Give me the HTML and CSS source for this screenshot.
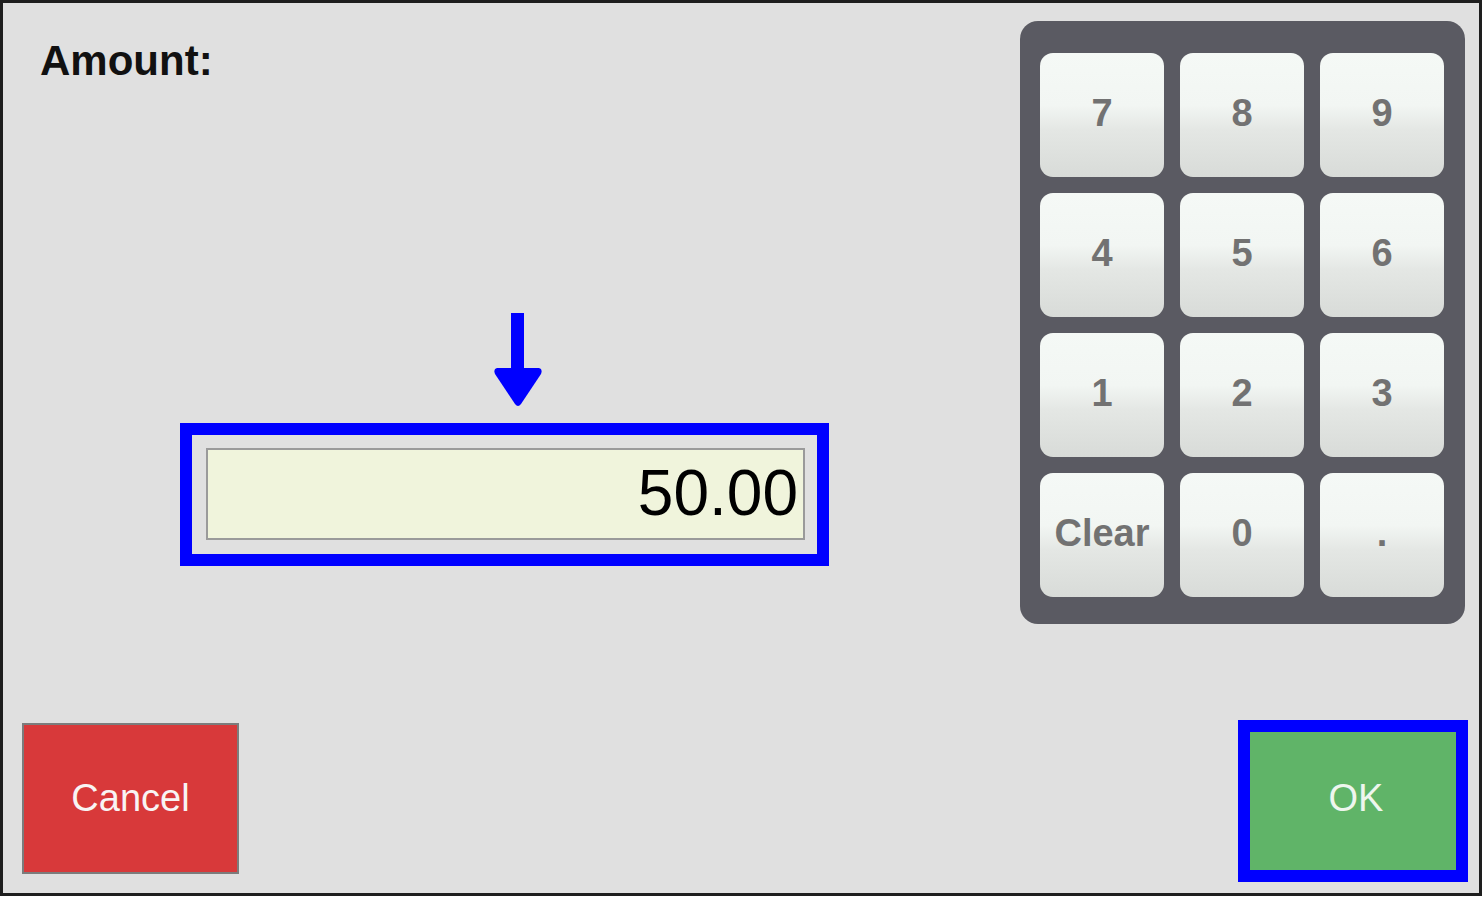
FILE: index.html
```html
<!DOCTYPE html>
<html>
<head>
<meta charset="utf-8">
<link rel="stylesheet" href="styles.css">
</head>
<body>
<div class="frame">
  <div class="main">
    <div class="left">
      <div class="title">Amount:</div>
      <svg class="arrow" width="50" height="93" viewBox="0 0 50 93">
        <rect x="18" y="0" width="13" height="58" fill="#0000ff"/>
        <path d="M4 55 L46 55 Q50 56 48 61 L28 91 Q25 95 22 91 L2 61 Q0 56 4 55 Z" fill="#0000ff"/>
      </svg>
      <div class="highlight field-wrap">
        <div class="field">50.00</div>
      </div>
    </div>
    <div class="keypad">
      <div class="key">7</div>
      <div class="key">8</div>
      <div class="key">9</div>
      <div class="key">4</div>
      <div class="key">5</div>
      <div class="key">6</div>
      <div class="key">1</div>
      <div class="key">2</div>
      <div class="key">3</div>
      <div class="key">Clear</div>
      <div class="key">0</div>
      <div class="key">.</div>
    </div>
  </div>
  <div class="bottom">
    <div class="btn btn-cancel">Cancel</div>
    <div class="highlight ok-wrap">
      <div class="btn btn-ok">OK</div>
    </div>
  </div>
</div>
</body>
</html>
```

FILE: styles.css
```css
html, body {
  margin: 0;
  padding: 0;
  background: #ffffff;
}

body {
  font-family: "Liberation Sans", Arial, sans-serif;
}

.frame {
  width: 1482px;
  height: 896px;
  box-sizing: border-box;
  border: 3px solid #1e1e1e;
  background: #e0e0e0;
  display: flex;
  flex-direction: column;
}

.main {
  flex: 1;
  display: flex;
  justify-content: space-between;
  align-items: flex-start;
}

.left {
  display: flex;
  flex-direction: column;
  align-items: flex-start;
}

.title {
  margin: 37px 0 0 37px;
  font-size: 42px;
  line-height: 42px;
  font-weight: bold;
  color: #111111;
}

.arrow {
  display: block;
  margin: 231px 0 0 490px;
}

.highlight {
  border: 12px solid #0000ff;
  box-sizing: border-box;
}

.field-wrap {
  margin: 17px 0 0 177px;
  width: 649px;
  height: 143px;
  padding: 13px 12px 14px 14px;
}

.field {
  height: 92px;
  box-sizing: border-box;
  border: 2px solid #9a9a9a;
  background: #f0f4dc;
  font-size: 64px;
  line-height: 86px;
  text-align: right;
  padding-right: 5px;
  color: #000000;
}

.keypad {
  margin: 18px 14px 0 0;
  background: #5a5a62;
  border-radius: 18px;
  padding: 32px 21px 27px 20px;
  display: grid;
  grid-template-columns: repeat(3, 124px);
  grid-auto-rows: 124px;
  gap: 16px;
}

.key {
  border-radius: 13px;
  background: linear-gradient(#f5f9f6 0%, #f2f6f3 42%, #e4e7e4 62%, #d8dbd8 100%);
  display: flex;
  align-items: center;
  justify-content: center;
  font-size: 38px;
  font-weight: bold;
  color: #727272;
  padding-bottom: 3px;
  box-sizing: border-box;
}

.bottom {
  display: flex;
  justify-content: space-between;
  align-items: flex-end;
  padding: 0 11px 11px 19px;
}

.btn {
  display: flex;
  align-items: center;
  justify-content: center;
  font-size: 38px;
  color: #f8f4f4;
  box-sizing: border-box;
}

.btn-cancel {
  width: 217px;
  height: 151px;
  margin-bottom: 8px;
  background: #d8393a;
  border: 2px solid #7c7c7c;
}

.ok-wrap {
  width: 230px;
  height: 162px;
}

.btn-ok {
  width: 100%;
  height: 100%;
  background: #60b468;
  color: #eef6ee;
  padding: 0 0 5px 6px;
}
```
